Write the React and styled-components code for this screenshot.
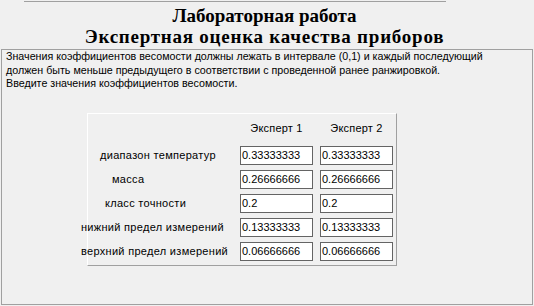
import React from "react";
import styled, { createGlobalStyle } from "styled-components";

const Global = createGlobalStyle`
  html, body { margin: 0; padding: 0; background: #f0f0f0; }
  body { width: 534px; height: 306px; overflow: hidden; font-family: "Liberation Sans", Arial, sans-serif; }
`;

const Page = styled.div`
  width: 534px;
  height: 306px;
  display: flex;
  flex-direction: column;
  background: #f0f0f0;
`;

const TopRule = styled.div`
  margin: 1px 0 0 24px;
  width: 422px;
  height: 0;
  border-top: 1px solid #a0a0a0;
`;

const Title = styled.h1`
  margin: 3px 0 0 0;
  width: 529px;
  display: flex;
  flex-direction: column;
  align-items: center;
  font-family: "Liberation Serif", "Times New Roman", serif;
  font-weight: bold;
  font-size: 19px;
  line-height: 21px;
  color: #000;
`;

const TitleLine = styled.span`
  letter-spacing: ${(p) => p.$spacing}px;
  white-space: nowrap;
`;

const Panel = styled.div`
  margin: 2px 0 0 1px;
  width: 526px;
  height: 254px;
  border: 1px solid #a0a0a0;
  padding: 0 0 0 4px;
  box-sizing: content-box;
  display: flex;
  flex-direction: column;
  align-items: flex-start;
`;

const Intro = styled.p`
  margin: 0;
  font-size: 10.7px;
  line-height: 13.5px;
  color: #000;
`;

const Group = styled.div`
  margin: 22px 0 0 81px;
  border-top: 1px solid #ffffff;
  border-left: 1px solid #ffffff;
  border-right: 1px solid #a0a0a0;
  border-bottom: 1px solid #a0a0a0;
  padding: 0 3px 4px 0;
  display: grid;
  grid-template-columns: 145px 73px 73px;
  grid-template-rows: 27px repeat(5, 19px);
  column-gap: 7px;
  row-gap: 5px;
`;

const Head = styled.div`
  grid-column: ${(p) => p.$col};
  align-self: end;
  padding-bottom: 6px;
  text-align: center;
  font-size: 11px;
  line-height: 13px;
  letter-spacing: 0.2px;
`;

const Label = styled.div`
  align-self: center;
  margin-left: ${(p) => p.$indent}px;
  font-size: 11px;
  line-height: 13px;
  letter-spacing: 0.3px;
  white-space: nowrap;
`;

const Field = styled.div`
  box-sizing: border-box;
  width: 73px;
  height: 19px;
  border: 1px solid #646464;
  background: #ffffff;
  padding: 0 0 0 1px;
  font-size: 11px;
  line-height: 17px;
  color: #000;
  white-space: nowrap;
`;

const rows = [
  { label: "диапазон температур", indent: 12, a: "0.33333333", b: "0.33333333" },
  { label: "масса", indent: 24, a: "0.26666666", b: "0.26666666" },
  { label: "класс точности", indent: 17, a: "0.2", b: "0.2" },
  { label: "нижний предел измерений", indent: -7, a: "0.13333333", b: "0.13333333" },
  { label: "верхний предел измерений", indent: -7, a: "0.06666666", b: "0.06666666" },
];

export default function App() {
  return (
    <Page>
      <Global />
      <TopRule />
      <Title>
        <TitleLine $spacing={0}>Лабораторная работа</TitleLine>
        <TitleLine $spacing={0.75}>Экспертная оценка качества приборов</TitleLine>
      </Title>
      <Panel>
        <Intro>
          Значения коэффициентов весомости должны лежать в интервале (0,1) и каждый последующий
          <br />
          должен быть меньше предыдущего в соответствии с проведенной ранее ранжировкой.
          <br />
          Введите значения коэффициентов весомости.
        </Intro>
        <Group>
          <Head $col={2}>Эксперт 1</Head>
          <Head $col={3}>Эксперт 2</Head>
          {rows.map((r) => (
            <React.Fragment key={r.label}>
              <Label $indent={r.indent}>{r.label}</Label>
              <Field>{r.a}</Field>
              <Field>{r.b}</Field>
            </React.Fragment>
          ))}
        </Group>
      </Panel>
    </Page>
  );
}
